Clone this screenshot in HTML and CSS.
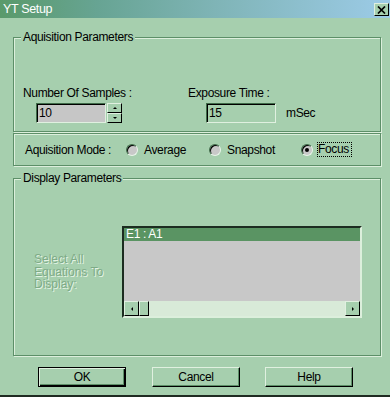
FILE: index.html
```html
<!DOCTYPE html>
<html>
<head>
    <title>YT Setup</title>
    <link rel="stylesheet" href="styles.css">
</head>
<body>
    <div class="window">
        <div class="titlebar">
            <span class="title">YT Setup</span>
            <div class="close-btn">
                <svg width="9" height="8" viewBox="0 0 9 8">
                    <path d="M1 0.5 L8 7.5 M8 0.5 L1 7.5" stroke="#000" stroke-width="1.7" fill="none"/>
                </svg>
            </div>
        </div>

        <div class="content">
            <div class="group acq-group">
                <div class="legend">Aquisition Parameters</div>
                <div class="acq-row">
                    <div class="field">
                        <div class="field-label">Number Of Samples :</div>
                        <div class="field-input samples">
                            <div class="textbox gray">10</div>
                            <div class="spinner">
                                <div class="spin-btn"><span class="arrow up"></span></div>
                                <div class="spin-btn"><span class="arrow down"></span></div>
                            </div>
                        </div>
                    </div>
                    <div class="field">
                        <div class="field-label">Exposure Time :</div>
                        <div class="field-input exposure">
                            <div class="textbox">15</div>
                            <span class="unit">mSec</span>
                        </div>
                    </div>
                </div>
            </div>

            <div class="group mode">
                <span class="mode-label">Aquisition Mode :</span>
                <div class="radio-option average">
                    <span class="radio"></span>
                    <span>Average</span>
                </div>
                <div class="radio-option snapshot">
                    <span class="radio"></span>
                    <span>Snapshot</span>
                </div>
                <div class="radio-option focus">
                    <span class="radio checked"></span>
                    <span class="focus-text">Focus</span>
                </div>
            </div>

            <div class="group display-group">
                <div class="legend">Display Parameters</div>
                <div class="display-row">
                    <div class="select-label">Select All Equations To Display:</div>
                    <div class="listbox">
                        <div class="list-item">E1 : A1</div>
                        <div class="list-body"></div>
                        <div class="hscroll">
                            <div class="sb-btn"><span class="arrow left"></span></div>
                            <div class="sb-btn thumb"></div>
                            <div class="sb-track"></div>
                            <div class="sb-btn"><span class="arrow right"></span></div>
                        </div>
                    </div>
                </div>
            </div>

            <div class="buttons">
                <div class="btn default">OK</div>
                <div class="btn cancel">Cancel</div>
                <div class="btn help">Help</div>
            </div>
        </div>
    </div>
</body>
</html>
```

FILE: styles.css
```css
body {
    margin: 0;
    font-family: 'Liberation Sans', Arial, sans-serif;
    font-size: 12px;
    letter-spacing: -0.35px;
    color: #000;
}

.window {
    width: 390px;
    height: 397px;
    box-sizing: border-box;
    background: #a6cfae;
    border-bottom: 2px solid #1f2b22;
    display: flex;
    flex-direction: column;
}

.titlebar {
    height: 18px;
    display: flex;
    justify-content: space-between;
    padding: 0 1px 0 3px;
    background: linear-gradient(to right, #5a9a6b, #67a493 25%, #7fb4b6 55%, #9ccbe7);
    color: #fff;
}

.title {
    font-size: 12.5px;
    line-height: 19px;
}

.close-btn {
    width: 15px;
    height: 13px;
    margin-top: 3px;
    box-sizing: border-box;
    background: #a6cfae;
    border: 1px solid;
    border-color: #e0f0e0 #000 #000 #e0f0e0;
    display: flex;
    align-items: center;
    justify-content: center;
}

.content {
    padding: 19px 9px 0 13px;
    display: flex;
    flex-direction: column;
}

.group {
    box-sizing: border-box;
    border: 1px solid #5d8f68;
    box-shadow: inset 1px 1px 0 #dcefdc, 1px 1px 0 #dcefdc;
    padding-left: 9px;
}

.legend {
    width: fit-content;
    margin-top: -8px;
    margin-left: -2px;
    padding: 0 2px;
    background: #a6cfae;
    line-height: 14px;
}

.acq-group {
    height: 95px;
}

.acq-row {
    display: grid;
    grid-template-columns: 165px auto;
    margin-top: 42px;
}

.field-label {
    line-height: 14px;
}

.field-input {
    display: flex;
    align-items: center;
    margin-top: 3px;
}

.samples {
    padding-left: 13px;
}

.exposure {
    padding-left: 18px;
}

.textbox {
    width: 70px;
    height: 20px;
    box-sizing: border-box;
    border: 1px solid;
    border-color: #3f6b48 #e0f0e0 #e0f0e0 #3f6b48;
    box-shadow: inset 1px 1px 0 #000;
    padding: 2px 0 0 2px;
    line-height: 15px;
}

.gray {
    background: #c6c6c6;
}

.spinner {
    display: flex;
    flex-direction: column;
    margin-left: 1px;
}

.spin-btn {
    width: 15px;
    height: 10px;
    box-sizing: border-box;
    background: #a6cfae;
    border: 1px solid;
    border-color: #e0f0e0 #000 #000 #e0f0e0;
    display: flex;
    align-items: center;
    justify-content: center;
}

.arrow {
    width: 0;
    height: 0;
}

.arrow.up {
    border-left: 2px solid transparent;
    border-right: 2px solid transparent;
    border-bottom: 2px solid #000;
}

.arrow.down {
    border-left: 2px solid transparent;
    border-right: 2px solid transparent;
    border-top: 2px solid #000;
}

.arrow.left {
    border-top: 2px solid transparent;
    border-bottom: 2px solid transparent;
    border-right: 2px solid #000;
}

.arrow.right {
    border-top: 2px solid transparent;
    border-bottom: 2px solid transparent;
    border-left: 2px solid #000;
}

.unit {
    margin-left: 10px;
}

.mode {
    height: 33px;
    margin-top: 1px;
    padding-left: 11px;
    display: flex;
    align-items: center;
}

.mode-label {
    width: 101px;
}

.radio-option {
    display: flex;
    align-items: center;
    gap: 6px;
}

.average {
    width: 83px;
}

.snapshot {
    width: 92px;
}

.focus {
    gap: 4px;
}

.radio {
    width: 12px;
    height: 12px;
    box-sizing: border-box;
    border-radius: 50%;
    background: #c8c8c8;
    border: 1px solid;
    border-color: #3f6b48 #e8f4e8 #e8f4e8 #3f6b48;
    box-shadow: inset 1px 1px 0 #000;
    display: flex;
    align-items: center;
    justify-content: center;
}

.radio.checked::after {
    content: '';
    width: 4px;
    height: 4px;
    border-radius: 50%;
    background: #000;
}

.focus-text {
    border: 1px dotted #000;
    padding: 0 2px 0 0;
    line-height: 13px;
}

.display-group {
    height: 178px;
    margin-top: 12px;
}

.display-row {
    display: flex;
    align-items: center;
    margin-top: 41px;
    padding-left: 11px;
}

.select-label {
    width: 88px;
    line-height: 12.5px;
    letter-spacing: 0;
    color: #7eab87;
    text-shadow: 1px 1px 0 #e4f3e4;
}

.listbox {
    width: 240px;
    height: 92px;
    box-sizing: border-box;
    border: 2px solid;
    border-color: #1c2c20 #dcefdc #dcefdc #1c2c20;
    display: flex;
    flex-direction: column;
}

.list-item {
    height: 13px;
    line-height: 13px;
    padding-left: 2px;
    background: #5a9463;
    color: #fff;
}

.list-body {
    flex: 1;
    background: #c8c8c8;
}

.hscroll {
    height: 15px;
    display: flex;
    background: #d8ead8;
}

.sb-btn {
    width: 15px;
    box-sizing: border-box;
    background: #a6cfae;
    border: 1px solid;
    border-color: #e0f0e0 #000 #000 #e0f0e0;
    display: flex;
    align-items: center;
    justify-content: center;
}

.sb-btn.thumb {
    width: 10px;
}

.sb-track {
    flex: 1;
}

.buttons {
    display: flex;
    margin-top: 11px;
    padding-left: 25px;
}

.btn {
    width: 88px;
    height: 20px;
    box-sizing: border-box;
    background: #a6cfae;
    border: 1px solid;
    border-color: #e0f0e0 #000 #000 #e0f0e0;
    box-shadow: inset -1px -1px 0 #5d8f68;
    text-align: center;
    line-height: 18px;
}

.btn.default {
    border-color: #000;
    box-shadow: inset 1px 1px 0 #e0f0e0, inset -1px -1px 0 #000, inset -2px -2px 0 #5d8f68;
}

.cancel {
    margin-left: 26px;
}

.help {
    margin-left: 25px;
}
```
